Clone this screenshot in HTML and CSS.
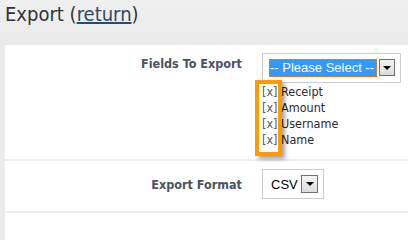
FILE: index.html
```html
<!DOCTYPE html>
<html>
<head>
<meta charset="utf-8">
<link rel="stylesheet" href="styles.css">
</head>
<body>
<div class="header">
  <h1 class="title">Export (<a class="back" href="#">return</a>)</h1>
</div>
<div class="panel">
  <div class="row row-fields">
    <div class="label label-top">Fields To Export</div>
    <div class="field">
      <div class="selbox selbox-wide">
        <div class="select">
          <span class="sel-text sel-focus">-- Please Select --</span>
          <span class="sel-btn"><span class="tri"></span></span>
        </div>
      </div>
      <ul class="fields">
        <li><span class="rm">[x]</span> Receipt</li>
        <li><span class="rm">[x]</span> Amount</li>
        <li><span class="rm">[x]</span> Username</li>
        <li><span class="rm">[x]</span> Name</li>
      </ul>
      <div class="hilite"></div>
    </div>
  </div>
  <div class="row row-format">
    <div class="label label-mid">Export Format</div>
    <div class="field">
      <div class="selbox selbox-small">
        <div class="select">
          <span class="sel-text">CSV</span>
          <span class="sel-btn"><span class="tri"></span></span>
        </div>
      </div>
    </div>
  </div>
</div>
</body>
</html>
```

FILE: styles.css
```css
html, body {
  margin: 0;
  padding: 0;
  background: #ebebeb;
  height: 100%;
  overflow: hidden;
}
body {
  font-family: "DejaVu Sans Condensed", "DejaVu Sans", sans-serif;
  font-stretch: semi-condensed;
  color: #333;
  display: flex;
  flex-direction: column;
}
.header {
  height: 45px;
  flex: none;
  padding-left: 5px;
  box-sizing: border-box;
  background: linear-gradient(#f0f0f0, #eaeaea);
}
.title {
  margin: 0;
  padding-top: 1px;
  font-weight: normal;
  font-size: 20px;
  line-height: 27px;
  color: #333;
}
.back {
  color: #2c4a66;
  text-decoration: underline;
}
.panel {
  flex: 1;
  margin-left: 5px;
  background: #fff;
}
.row {
  display: grid;
  grid-template-columns: 257px 1fr;
  border-bottom: 2px solid #ececec;
}
.row-fields {
  height: 116px;
  padding-top: 8px;
  box-sizing: border-box;
}
.row-format {
  height: 52px;
  padding-top: 8px;
  box-sizing: border-box;
  align-items: start;
}
.label {
  text-align: right;
  padding-right: 20px;
  font-weight: bold;
  font-size: 12.5px;
  color: #4b5260;
}
.label-top {
  padding-top: 3px;
}
.label-mid {
  padding-top: 8px;
}
.field {
  position: relative;
}
.selbox {
  display: inline-block;
  border: 1px solid #cccccc;
  box-sizing: border-box;
  height: 30px;
  padding: 5px 5px 0 6px;
}
.selbox-wide { width: 139px; }
.selbox-small { width: 62px; padding-left: 6px; }
.select {
  display: flex;
  align-items: flex-start;
  gap: 2px;
  font-family: "Liberation Sans", Arial, sans-serif;
  font-size: 13px;
}
.sel-text {
  height: 18px;
  line-height: 18px;
  padding: 0 1px;
  box-sizing: border-box;
  white-space: nowrap;
  color: #000;
}
.sel-focus {
  background: #3399ff;
  color: #fff;
  outline: 1px dotted #d9822b;
  outline-offset: -1px;
  width: 108px;
  overflow: hidden;
}
.selbox-small .sel-text {
  padding-left: 2px;
  line-height: 19px;
  height: 19px;
  width: 31px;
}
.sel-btn {
  width: 16px;
  height: 17px;
  border: 1px solid #707070;
  box-sizing: border-box;
  background: linear-gradient(#f4f4f4, #dcdcdc);
  display: flex;
  align-items: center;
  justify-content: center;
}
.selbox-small .sel-btn {
  width: 17px;
  height: 18px;
}
.tri {
  width: 0;
  height: 0;
  border-left: 4px solid transparent;
  border-right: 4px solid transparent;
  border-top: 4px solid #000;
}
.fields {
  list-style: none;
  margin: 1px 0 0 0;
  padding: 0;
  font-size: 12.5px;
  line-height: 16px;
  color: #2b2b2b;
}
.rm {
  color: #555;
}
.hilite {
  position: absolute;
  left: -7px;
  top: 27px;
  width: 27px;
  height: 76px;
  box-sizing: border-box;
  border: 4px solid #ff9a00;
  box-shadow: 3px 3px 4px rgba(0, 0, 0, 0.35);
}
```
